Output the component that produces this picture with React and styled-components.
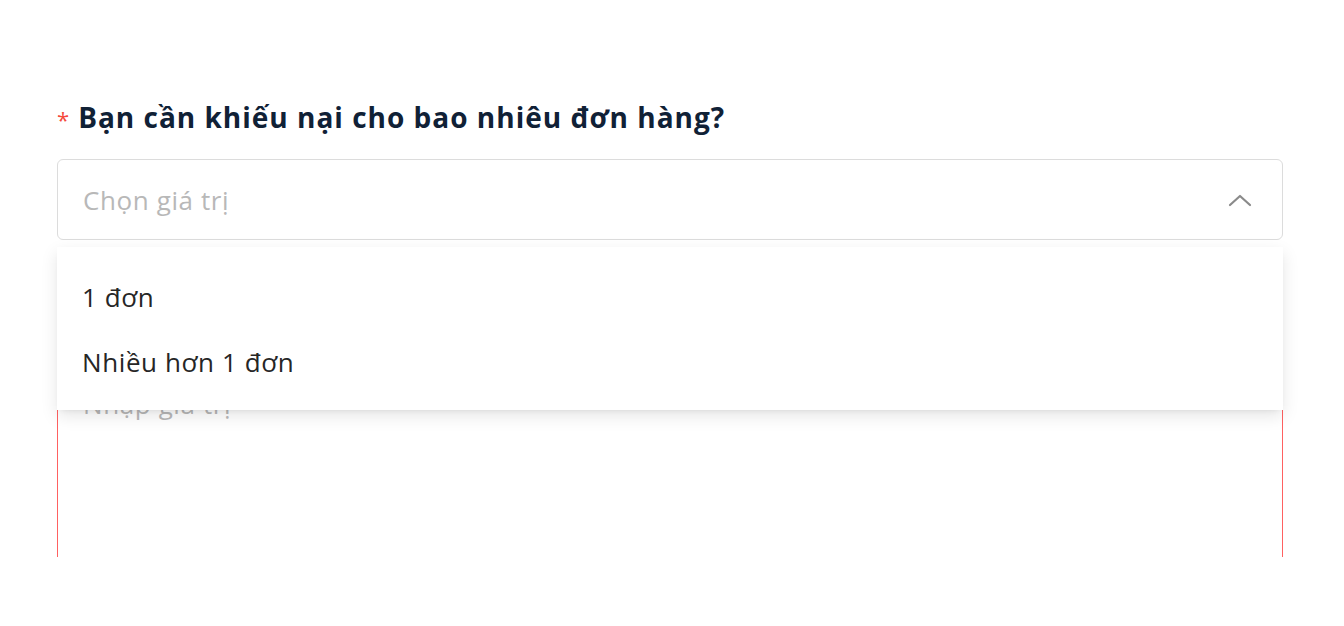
import React from 'react'
import styled, { createGlobalStyle } from 'styled-components'

const Global = createGlobalStyle`
  body {
    margin: 0;
    background: #fff;
    font-family: "Open Sans", "Noto Sans", sans-serif;
  }
`;

const Page = styled.div`
  height: 557px;
  overflow: hidden;
  padding: 98px 61px 0 57px;
  box-sizing: border-box;
`;

const Field = styled.div`
  position: relative;
  margin-bottom: ${({ gap }) => gap || 0}px;
`;

const Label = styled.div`
  display: flex;
  align-items: baseline;
  font-size: 28px;
  font-weight: 700;
  letter-spacing: 1px;
  color: #102136;
  height: 40px;
  margin-bottom: 21px;
  visibility: ${({ hidden }) => (hidden ? 'hidden' : 'visible')};
`;

const Star = styled.span`
  color: #f5483b;
  font-size: 22px;
  font-weight: 400;
  margin-right: 8px;
`;

const Select = styled.div`
  height: 81px;
  box-sizing: border-box;
  border: 1px solid #dcdcdc;
  border-radius: 6px;
  display: flex;
  align-items: center;
  justify-content: space-between;
  padding: 0 30px 0 25px;
  font-size: 26px;
  letter-spacing: 0.6px;
  color: #b8b8b8;
`;

const Menu = styled.div`
  position: absolute;
  left: 0;
  right: 0;
  top: 149px;
  background: #fff;
  padding: 17px 0 16px;
  box-shadow: 0 6px 16px rgba(0, 0, 0, 0.1), 0 3px 6px -4px rgba(0, 0, 0, 0.12);
  z-index: 2;
`;

const Option = styled.div`
  height: 65px;
  display: flex;
  align-items: center;
  padding: 0 25px;
  font-size: 26px;
  letter-spacing: 0.6px;
  color: #262626;
`;

const Textarea = styled.div`
  height: 220px;
  border: 1px solid #ff6161;
  border-radius: 6px;
  padding: 28px 25px;
  font-size: 26px;
  letter-spacing: 0.6px;
  color: #b8b8b8;
`;

const Chevron = () => (
  <svg width="24" height="14" viewBox="0 0 24 14" fill="none">
    <path d="M2 12 L12 3 L22 12" stroke="#8a8a8a" strokeWidth="2.2" strokeLinecap="round" strokeLinejoin="round" />
  </svg>
);

export default function App() {
  return (
    <>
      <Global />
      <Page>
        <Field gap={56}>
          <Label><Star>*</Star>Bạn cần khiếu nại cho bao nhiêu đơn hàng?</Label>
          <Select>
            <span>Chọn giá trị</span>
            <Chevron />
          </Select>
          <Menu>
            <Option>1 đơn</Option>
            <Option>Nhiều hơn 1 đơn</Option>
          </Menu>
        </Field>
        <Field>
          <Label hidden><Star>*</Star>Mô tả chi tiết</Label>
          <Textarea>Nhập giá trị</Textarea>
        </Field>
      </Page>
    </>
  )
}
